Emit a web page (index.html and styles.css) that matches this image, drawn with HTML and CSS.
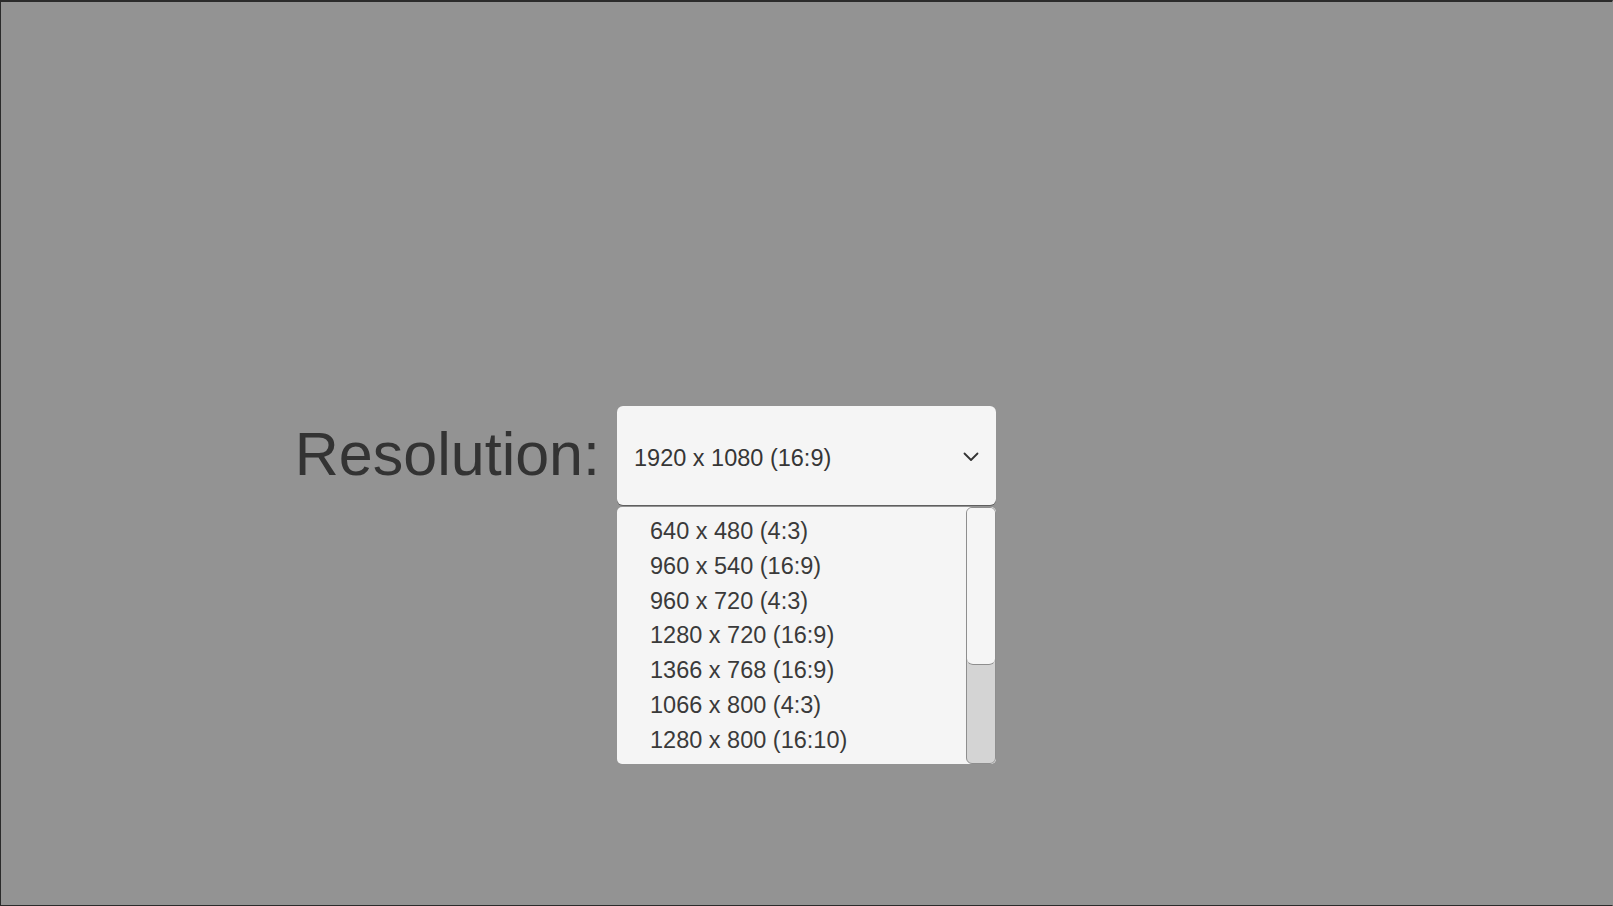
FILE: index.html
```html
<!DOCTYPE html>
<html lang="en">
<head>
<meta charset="utf-8">
<title>Resolution</title>
<link rel="stylesheet" href="styles.css">
</head>
<body>
<div class="screen">
  <div class="row">
    <div class="label">Resolution:</div>
    <div class="dropdown">
      <div class="dd-button">
        <span class="dd-value">1920 x 1080 (16:9)</span>
        <svg class="chevron" width="16" height="10" viewBox="0 0 16 10"><path d="M1.5 1.5 L8 8 L14.5 1.5" fill="none" stroke="#333" stroke-width="1.8" stroke-linecap="round" stroke-linejoin="round"/></svg>
      </div>
      <div class="dd-list">
        <ul class="items">
          <li>640 x 480 (4:3)</li>
          <li>960 x 540 (16:9)</li>
          <li>960 x 720 (4:3)</li>
          <li>1280 x 720 (16:9)</li>
          <li>1366 x 768 (16:9)</li>
          <li>1066 x 800 (4:3)</li>
          <li>1280 x 800 (16:10)</li>
        </ul>
        <div class="scrollbar"><div class="thumb"></div></div>
      </div>
    </div>
  </div>
</div>
</body>
</html>
```
FILE: styles.css
```css
html, body {
  margin: 0;
  padding: 0;
}
body {
  background: #939393;
  font-family: "Liberation Sans", Arial, sans-serif;
  color: #323232;
}
.screen {
  box-sizing: border-box;
  width: 1613px;
  height: 906px;
  border: 1px solid #2b2b2b;
  border-top-width: 2px;
  border-right-color: #939393;
  background: #939393;
  padding-top: 404px;
  padding-left: 278px;
}
.row {
  display: flex;
  align-items: flex-start;
  gap: 17px;
}
.label {
  width: 321px;
  text-align: right;
  font-size: 61px;
  line-height: 97px;
  color: #333333;
}
.dropdown {
  width: 379px;
  display: flex;
  flex-direction: column;
  gap: 2px;
}
.dd-button {
  box-sizing: border-box;
  height: 99px;
  background: #f5f5f5;
  border-radius: 6px;
  box-shadow: 0 1px 0 rgba(0,0,0,0.35);
  display: flex;
  align-items: center;
  justify-content: space-between;
  padding: 5px 17px 0 17px;
}
.dd-value {
  font-size: 23.5px;
  line-height: 94px;
  color: #363636;
}
.chevron {
  display: block;
  margin-top: -3px;
}
.dd-list {
  height: 257px;
  background: #f5f5f5;
  border-radius: 5px;
  display: flex;
  overflow: hidden;
}
.items {
  list-style: none;
  margin: 0;
  padding: 7px 0 0 33px;
  flex: 1;
}
.items li {
  font-size: 23.5px;
  line-height: 34.75px;
  white-space: nowrap;
  color: #3a3a3a;
}
.scrollbar {
  box-sizing: border-box;
  width: 30px;
  height: 257px;
  background: #d4d4d4;
  border: 1px solid #8e8e8e;
  border-radius: 6px;
  overflow: hidden;
}
.thumb {
  box-sizing: border-box;
  height: 157px;
  background: #f5f5f5;
  border-bottom: 1px solid #8e8e8e;
  border-radius: 0 0 6px 6px;
}
```
